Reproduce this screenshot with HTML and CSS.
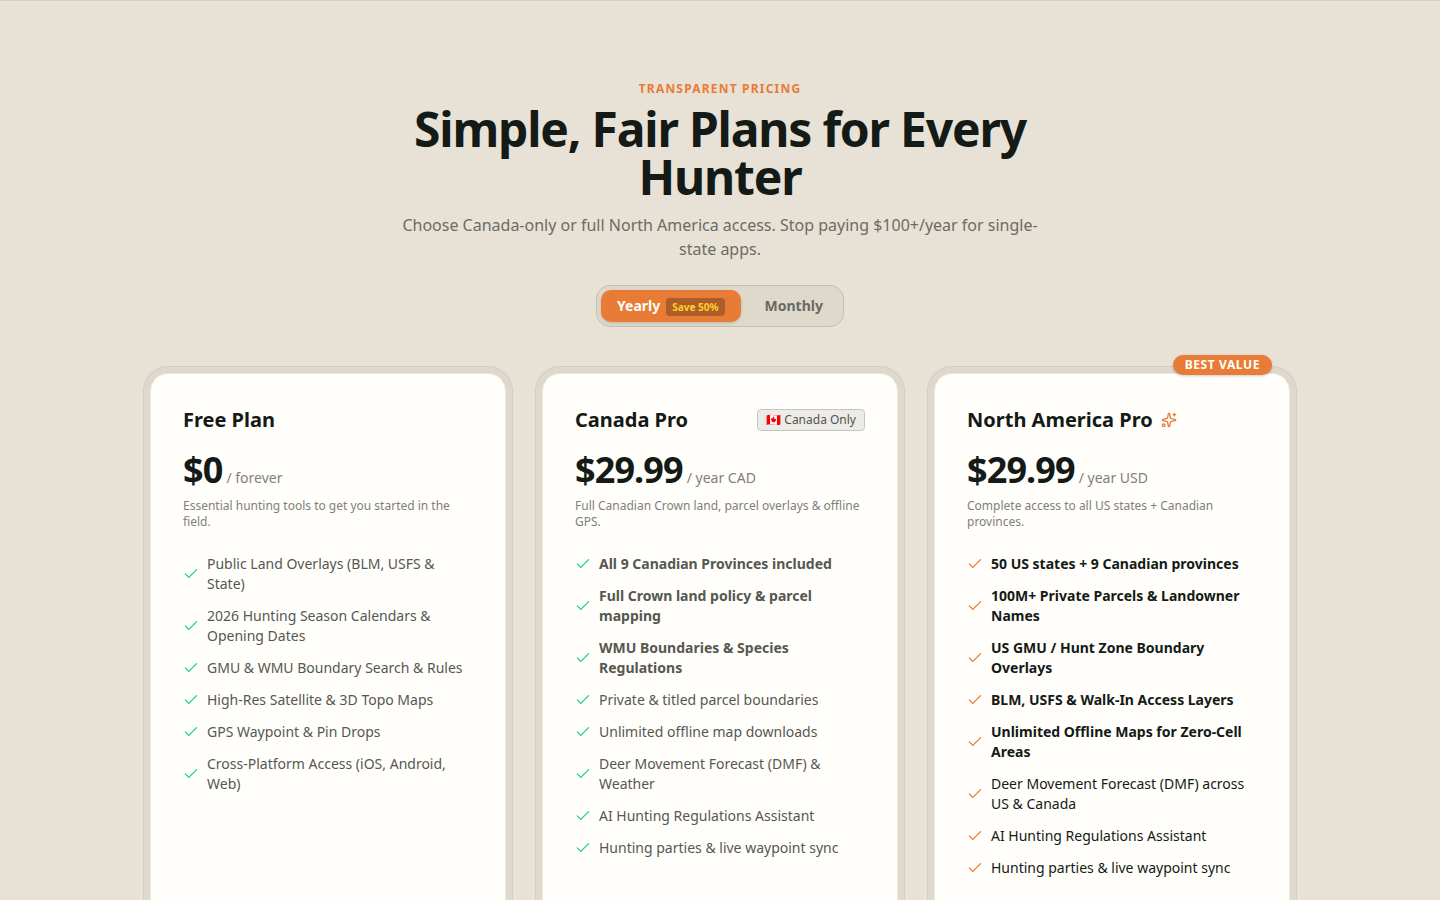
FILE: index.html
```html
<!DOCTYPE html>
<html lang="en">
<head>
    <meta charset="UTF-8">
    <meta name="viewport" content="width=device-width, initial-scale=1.0">
    <title>Pricing</title>
    <link rel="stylesheet" href="styles.css">
</head>
<body>
    <!-- Shared icons -->
    <svg class="sprite" aria-hidden="true">
        <symbol id="check" viewBox="0 0 16 16">
            <path d="M2.3 7.9l3.5 3.5 7.8-7.8" />
        </symbol>
        <symbol id="sparkle" viewBox="0 0 24 24">
            <path d="M11.017 2.814a1 1 0 0 1 1.966 0l1.051 5.558a2 2 0 0 0 1.594 1.594l5.558 1.051a1 1 0 0 1 0 1.966l-5.558 1.051a2 2 0 0 0-1.594 1.594l-1.051 5.558a1 1 0 0 1-1.966 0l-1.051-5.558a2 2 0 0 0-1.594-1.594l-5.558-1.051a1 1 0 0 1 0-1.966l5.558-1.051a2 2 0 0 0 1.594-1.594z" />
            <path d="M20 2v4M22 4h-4" />
            <circle cx="4" cy="20" r="2" />
        </symbol>
    </svg>

    <section class="pricing">
        <div class="container">
            <header class="pricing-header">
                <span class="eyebrow">Transparent Pricing</span>
                <h1>Simple, Fair Plans for Every Hunter</h1>
                <p class="lead">Choose Canada-only or full North America access. Stop paying $100+/year for single-state apps.</p>
                <div class="billing-toggle">
                    <button type="button" class="billing-option active" aria-pressed="true">Yearly <span class="save">Save 50%</span></button>
                    <button type="button" class="billing-option" aria-pressed="false">Monthly</button>
                </div>
            </header>

            <div class="plans">
                <article class="plan">
                    <div class="plan-inner">
                        <div class="plan-title">
                            <h2>Free Plan</h2>
                        </div>
                        <div class="price"><span class="amount">$0</span><span class="period">/ forever</span></div>
                        <p class="description">Essential hunting tools to get you started in the field.</p>
                        <ul class="features">
                            <li><svg class="check"><use href="#check" /></svg><span>Public Land Overlays (BLM, USFS &amp; State)</span></li>
                            <li><svg class="check"><use href="#check" /></svg><span>2026 Hunting Season Calendars &amp; Opening Dates</span></li>
                            <li><svg class="check"><use href="#check" /></svg><span>GMU &amp; WMU Boundary Search &amp; Rules</span></li>
                            <li><svg class="check"><use href="#check" /></svg><span>High-Res Satellite &amp; 3D Topo Maps</span></li>
                            <li><svg class="check"><use href="#check" /></svg><span>GPS Waypoint &amp; Pin Drops</span></li>
                            <li><svg class="check"><use href="#check" /></svg><span>Cross-Platform Access (iOS, Android, Web)</span></li>
                        </ul>
                    </div>
                </article>

                <article class="plan">
                    <div class="plan-inner">
                        <div class="plan-title">
                            <h2>Canada Pro</h2>
                            <span class="region">🇨🇦 Canada Only</span>
                        </div>
                        <div class="price"><span class="amount">$29.99</span><span class="period">/ year CAD</span></div>
                        <p class="description">Full Canadian Crown land, parcel overlays &amp; offline GPS.</p>
                        <ul class="features">
                            <li class="strong"><svg class="check"><use href="#check" /></svg><span>All 9 Canadian Provinces included</span></li>
                            <li class="strong"><svg class="check"><use href="#check" /></svg><span>Full Crown land policy &amp; parcel mapping</span></li>
                            <li class="strong"><svg class="check"><use href="#check" /></svg><span>WMU Boundaries &amp; Species Regulations</span></li>
                            <li><svg class="check"><use href="#check" /></svg><span>Private &amp; titled parcel boundaries</span></li>
                            <li><svg class="check"><use href="#check" /></svg><span>Unlimited offline map downloads</span></li>
                            <li><svg class="check"><use href="#check" /></svg><span>Deer Movement Forecast (DMF) &amp; Weather</span></li>
                            <li><svg class="check"><use href="#check" /></svg><span>AI Hunting Regulations Assistant</span></li>
                            <li><svg class="check"><use href="#check" /></svg><span>Hunting parties &amp; live waypoint sync</span></li>
                        </ul>
                    </div>
                </article>

                <article class="plan featured">
                    <span class="best-value">Best Value</span>
                    <div class="plan-inner">
                        <div class="plan-title">
                            <h2>North America Pro <svg class="sparkle"><use href="#sparkle" /></svg></h2>
                        </div>
                        <div class="price"><span class="amount">$29.99</span><span class="period">/ year USD</span></div>
                        <p class="description">Complete access to all US states + Canadian provinces.</p>
                        <ul class="features">
                            <li class="strong"><svg class="check"><use href="#check" /></svg><span>50 US states + 9 Canadian provinces</span></li>
                            <li class="strong"><svg class="check"><use href="#check" /></svg><span>100M+ Private Parcels &amp; Landowner Names</span></li>
                            <li class="strong"><svg class="check"><use href="#check" /></svg><span>US GMU / Hunt Zone Boundary Overlays</span></li>
                            <li class="strong"><svg class="check"><use href="#check" /></svg><span>BLM, USFS &amp; Walk-In Access Layers</span></li>
                            <li class="strong"><svg class="check"><use href="#check" /></svg><span>Unlimited Offline Maps for Zero-Cell Areas</span></li>
                            <li><svg class="check"><use href="#check" /></svg><span>Deer Movement Forecast (DMF) across US &amp; Canada</span></li>
                            <li><svg class="check"><use href="#check" /></svg><span>AI Hunting Regulations Assistant</span></li>
                            <li><svg class="check"><use href="#check" /></svg><span>Hunting parties &amp; live waypoint sync</span></li>
                        </ul>
                    </div>
                </article>
            </div>
        </div>
    </section>

    <script>
        // Billing toggle
        const options = document.querySelectorAll('.billing-option');

        options.forEach(option => {
            option.addEventListener('click', () => {
                options.forEach(o => {
                    o.classList.toggle('active', o === option);
                    o.setAttribute('aria-pressed', o === option);
                });
            });
        });
    </script>
</body>
</html>
```
FILE: styles.css
```css
* {
    box-sizing: border-box;
}
body {
    margin: 0;
    font-family: 'Noto Sans', sans-serif;
    font-size: 16px;
    line-height: 24px;
    color: #141a16;
    background: #e8e1d6;
}
h1, h2, p, ul {
    margin: 0;
    padding: 0;
}
.sprite {
    position: absolute;
    width: 0;
    height: 0;
}
.pricing {
    padding: 80px 0;
    border-top: 1px solid #d7cfc3;
}
.container {
    max-width: 1200px;
    margin: 0 auto;
    padding: 0 24px;
}

/* Header */
.pricing-header {
    display: flex;
    flex-direction: column;
    align-items: center;
    max-width: 672px;
    margin: 0 auto 40px;
    text-align: center;
}
.eyebrow {
    font-size: 12px;
    line-height: 16px;
    font-weight: 700;
    letter-spacing: 0.1em;
    text-transform: uppercase;
    color: #e87b35;
}
h1 {
    margin-top: 8px;
    font-size: 48px;
    line-height: 48px;
    font-weight: 700;
    letter-spacing: -0.025em;
}
.lead {
    margin-top: 12px;
    padding: 0 16px;
    color: #6b6c64;
}
.billing-toggle {
    display: flex;
    margin-top: 24px;
    padding: 4px;
    background: #dfd9cc;
    border: 1px solid #c3beb2;
    border-radius: 14px;
}
.billing-option {
    display: flex;
    align-items: baseline;
    gap: 6px;
    padding: 6px 16px;
    font-family: inherit;
    font-size: 14px;
    line-height: 20px;
    font-weight: 700;
    color: #686a61;
    background: none;
    border: none;
    border-radius: 10px;
    cursor: pointer;
}
.billing-option + .billing-option {
    margin-left: 8px;
}
.billing-option.active {
    color: #fffefa;
    background: #e87b35;
    box-shadow: 0 1px 3px rgba(0, 0, 0, 0.15);
}
.save {
    padding: 2px 6px;
    font-size: 10px;
    line-height: 14px;
    color: #ffd230;
    background: #ae5c28;
    border-radius: 4px;
}

/* Plans */
.plans {
    display: grid;
    grid-template-columns: repeat(3, 1fr);
    gap: 24px;
}
.plan {
    position: relative;
    display: flex;
    padding: 6px;
    background: #dfd8cc;
    border-radius: 24px;
    box-shadow: 0 0 0 1px #d3ccbf;
}
.plan-inner {
    flex: 1;
    padding: 32px 32px 48px;
    background: #fffefa;
    border: 1px solid #ebe7dd;
    border-radius: 18px;
}
.best-value {
    position: absolute;
    top: -12px;
    right: 24px;
    padding: 2px 12px;
    font-size: 12px;
    line-height: 16px;
    font-weight: 700;
    letter-spacing: 0.05em;
    text-transform: uppercase;
    color: #fffefa;
    background: #e87b35;
    border-radius: 999px;
    box-shadow: 0 1px 3px rgba(0, 0, 0, 0.2);
}
.plan-title {
    display: flex;
    align-items: center;
    justify-content: space-between;
    height: 28px;
}
.plan-title h2 {
    display: flex;
    align-items: center;
    gap: 8px;
    font-size: 20px;
    line-height: 28px;
    font-weight: 700;
}
.sparkle {
    width: 16px;
    height: 16px;
    fill: none;
    stroke: #e87b35;
    stroke-width: 2;
    stroke-linecap: round;
    stroke-linejoin: round;
}
.region {
    padding: 2px 8px;
    font-size: 12px;
    line-height: 16px;
    color: #52554f;
    background: #ecebe7;
    border: 1px solid #c5c6c1;
    border-radius: 4px;
}
.price {
    display: flex;
    align-items: baseline;
    gap: 4px;
    margin-top: 16px;
}
.amount {
    font-size: 36px;
    line-height: 40px;
    font-weight: 700;
    letter-spacing: -0.025em;
}
.period {
    font-size: 14px;
    line-height: 20px;
    color: #7f807a;
}
.description {
    margin-top: 8px;
    font-size: 12px;
    line-height: 16px;
    color: #7f807a;
}
.features {
    display: flex;
    flex-direction: column;
    gap: 12px;
    margin-top: 24px;
    list-style: none;
    font-size: 14px;
    line-height: 20px;
    color: #555852;
}
.features li {
    display: flex;
    align-items: center;
    gap: 8px;
}
.features .strong {
    font-weight: 700;
}
.featured .features {
    color: #141a16;
}
.check {
    flex: none;
    width: 16px;
    height: 16px;
    fill: none;
    stroke: #20cf8b;
    stroke-width: 1.3;
    stroke-linecap: round;
    stroke-linejoin: round;
}
.featured .check {
    stroke: #e87b35;
}

/* Responsive Styles */
@media (max-width: 900px) {
    .plans {
        grid-template-columns: 1fr;
    }
}
```
